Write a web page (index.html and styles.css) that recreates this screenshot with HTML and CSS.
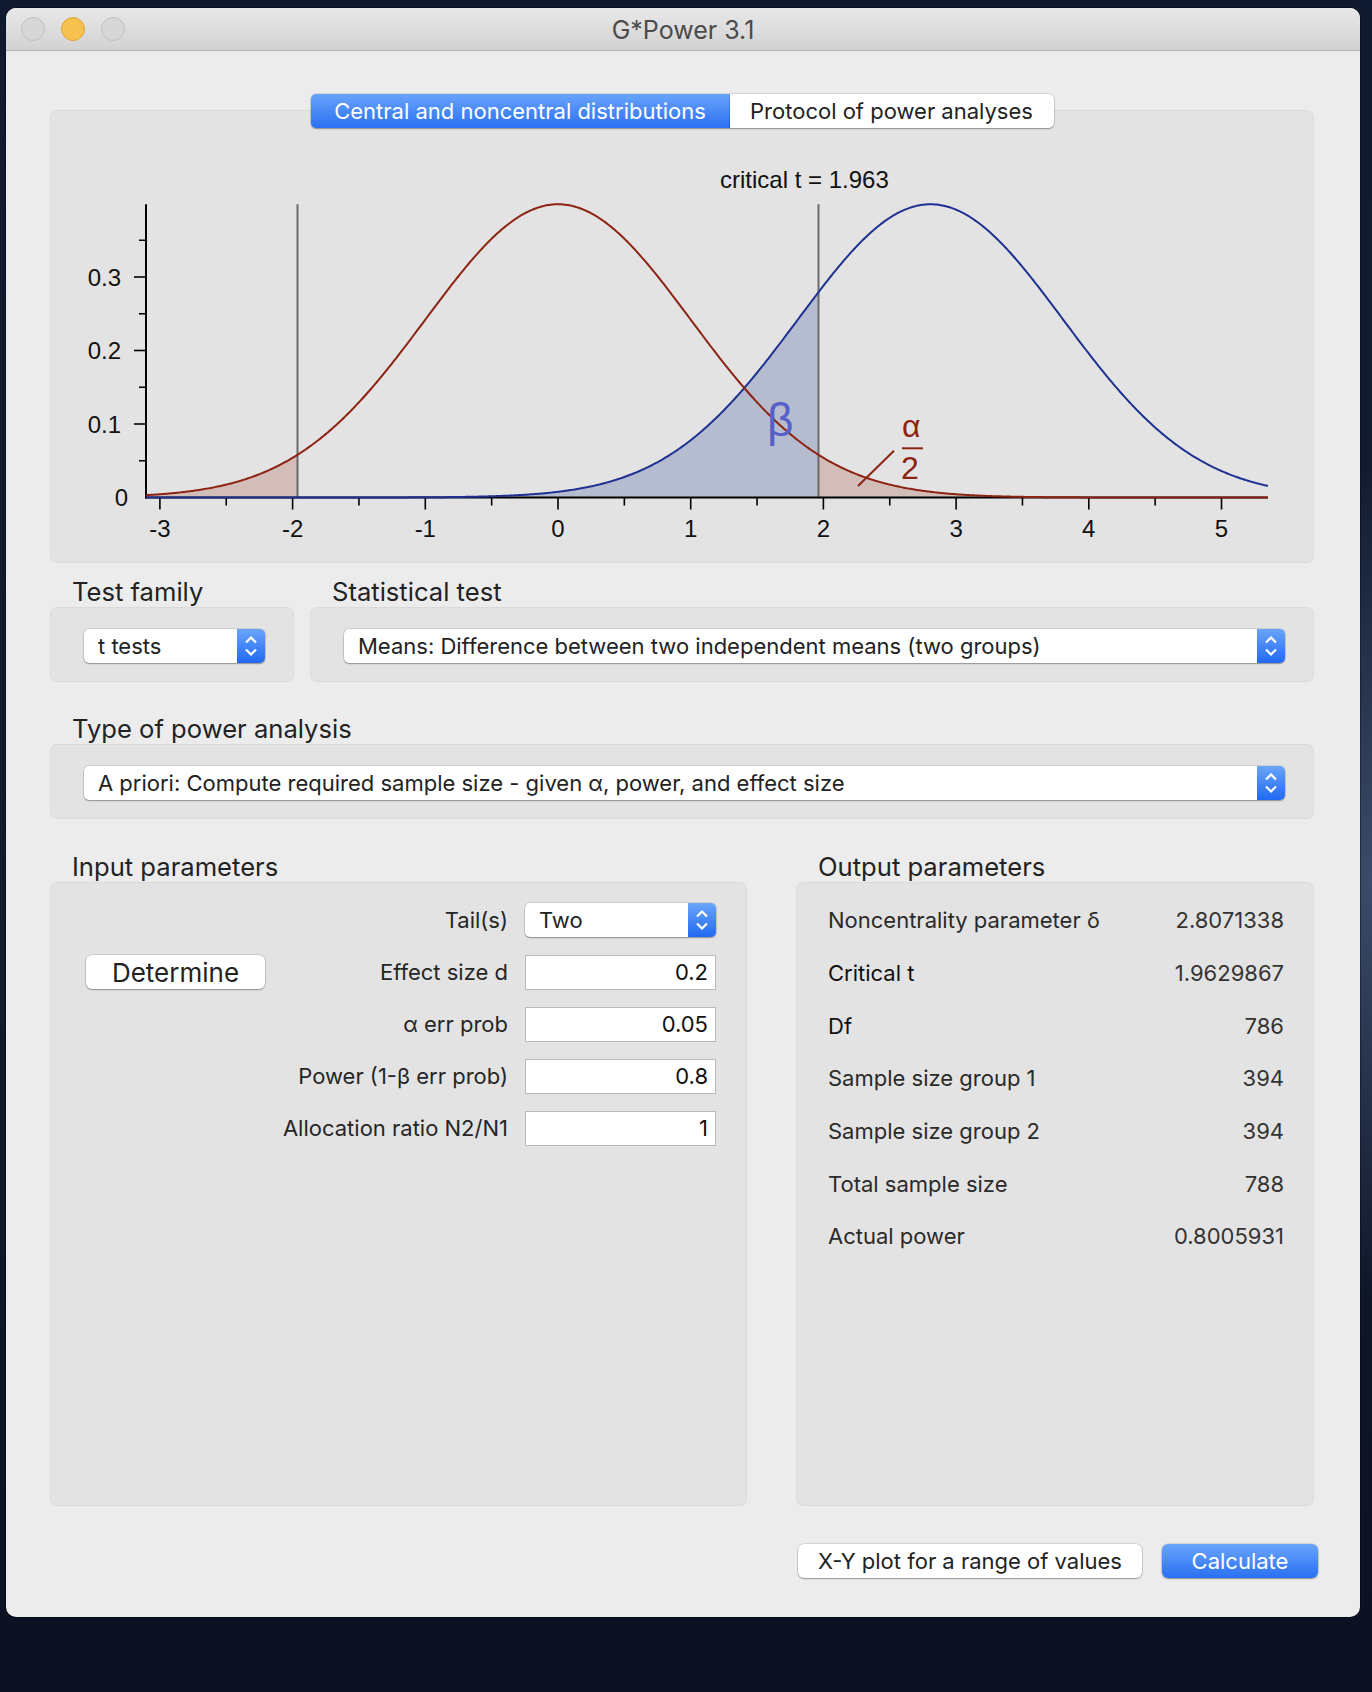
FILE: index.html
```html
<!DOCTYPE html>
<html lang="en">
<head>
  <meta charset="UTF-8">
  <title>G*Power 3.1</title>
  <link rel="stylesheet" href="styles.css">
</head>
<body>

<div class="window">
  <div class="titlebar">
    <div class="lights">
      <span class="light"></span>
      <span class="light light-min"></span>
      <span class="light"></span>
    </div>
    <div class="title">G*Power 3.1</div>
    <div></div>
  </div>

  <div class="content">
    <div class="plot-section">
      <div class="tabs">
        <div class="tab tab-active">Central and noncentral distributions</div>
        <div class="tab tab-protocol">Protocol of power analyses</div>
      </div>
      <div class="panel plot-panel">
        <svg id="plot" width="1262" height="451"></svg>
      </div>
    </div>

    <div class="row">
      <div class="group group-family">
        <div class="group-label">Test family</div>
        <div class="panel box">
          <div class="popup">
            <span class="popup-text">t tests</span>
            <span class="stepper"><svg width="28" height="34"><path d="M9 13.5 L14 8.5 L19 13.5 M9 20.5 L14 25.5 L19 20.5"/></svg></span>
          </div>
        </div>
      </div>
      <div class="group group-test">
        <div class="group-label">Statistical test</div>
        <div class="panel box">
          <div class="popup">
            <span class="popup-text">Means: Difference between two independent means (two groups)</span>
            <span class="stepper"><svg width="28" height="34"><path d="M9 13.5 L14 8.5 L19 13.5 M9 20.5 L14 25.5 L19 20.5"/></svg></span>
          </div>
        </div>
      </div>
    </div>

    <div class="group group-type">
      <div class="group-label">Type of power analysis</div>
      <div class="panel box">
        <div class="popup">
          <span class="popup-text">A priori: Compute required sample size - given α, power, and effect size</span>
          <span class="stepper"><svg width="28" height="34"><path d="M9 13.5 L14 8.5 L19 13.5 M9 20.5 L14 25.5 L19 20.5"/></svg></span>
        </div>
      </div>
    </div>

    <div class="row params">
      <div class="group group-input">
        <div class="group-label">Input parameters</div>
        <div class="panel params-box inputs">
          <div class="param-row">
            <span class="param-label">Tail(s)</span>
            <div class="popup popup-tails">
              <span class="popup-text">Two</span>
              <span class="stepper"><svg width="28" height="34"><path d="M9 13.5 L14 8.5 L19 13.5 M9 20.5 L14 25.5 L19 20.5"/></svg></span>
            </div>
          </div>
          <div class="param-row">
            <button class="btn btn-determine">Determine</button>
            <span class="param-label">Effect size d</span>
            <div class="field">0.2</div>
          </div>
          <div class="param-row">
            <span class="param-label">α err prob</span>
            <div class="field">0.05</div>
          </div>
          <div class="param-row">
            <span class="param-label">Power (1-β err prob)</span>
            <div class="field">0.8</div>
          </div>
          <div class="param-row">
            <span class="param-label">Allocation ratio N2/N1</span>
            <div class="field">1</div>
          </div>
        </div>
      </div>
      <div class="group group-output">
        <div class="group-label">Output parameters</div>
        <div class="panel params-box outputs">
          <div class="out-row"><span>Noncentrality parameter δ</span><span class="out-value">2.8071338</span></div>
          <div class="out-row out-dark"><span>Critical t</span><span class="out-value">1.9629867</span></div>
          <div class="out-row out-dark"><span>Df</span><span class="out-value">786</span></div>
          <div class="out-row"><span>Sample size group 1</span><span class="out-value">394</span></div>
          <div class="out-row"><span>Sample size group 2</span><span class="out-value">394</span></div>
          <div class="out-row"><span>Total sample size</span><span class="out-value">788</span></div>
          <div class="out-row"><span>Actual power</span><span class="out-value">0.8005931</span></div>
        </div>
      </div>
    </div>

    <div class="actions">
      <button class="btn btn-xy">X-Y plot for a range of values</button>
      <button class="btn btn-calc">Calculate</button>
    </div>
  </div>
</div>

<script>
  // central t (df = 786) and noncentral t (delta = 2.807) drawn as normal densities
  const NS = "http://www.w3.org/2000/svg";
  const plot = document.getElementById("plot");

  const T_MIN = -3.105, T_MAX = 5.35;
  const T_CRIT = 1.963, DELTA = 2.807;

  const X = t => 507 + 132.7 * t;
  const Y = p => 386.5 - 735 * p;

  function dens(t, mu) {
    const z = t - mu;
    return Math.exp(-z * z / 2) / Math.sqrt(2 * Math.PI);
  }

  function points(mu, a, b) {
    const pts = [];
    for (let t = a; t < b; t += 0.01) {
      pts.push(X(t).toFixed(2) + "," + Y(dens(t, mu)).toFixed(2));
    }
    pts.push(X(b).toFixed(2) + "," + Y(dens(b, mu)).toFixed(2));
    return pts;
  }

  function curve(mu, a, b) {
    return "M" + points(mu, a, b).join(" L");
  }

  function area(mu, a, b) {
    return "M" + X(a) + "," + Y(0) + " L" + points(mu, a, b).join(" L") + " L" + X(b) + "," + Y(0) + " Z";
  }

  function add(tag, attrs, text) {
    const el = document.createElementNS(NS, tag);
    for (const k in attrs) el.setAttribute(k, attrs[k]);
    if (text !== undefined) el.textContent = text;
    plot.appendChild(el);
    return el;
  }

  // shaded areas
  add("path", { d: area(0, T_MIN, -T_CRIT), class: "fill-alpha" });
  add("path", { d: area(DELTA, T_MIN, T_CRIT), class: "fill-beta" });
  add("path", { d: area(0, T_CRIT, T_MAX), class: "fill-alpha" });

  // critical t lines
  [-T_CRIT, T_CRIT].forEach(t => {
    add("line", { x1: X(t), y1: 93.3, x2: X(t), y2: Y(0), class: "crit" });
  });

  // axes
  add("line", { x1: 95, y1: 93.3, x2: 95, y2: Y(0) + 1, class: "axis" });
  add("line", { x1: 94, y1: Y(0), x2: X(T_MAX), y2: Y(0), class: "axis" });

  for (let i = 1; i <= 7; i++) {
    const p = i * 0.05;
    const major = i % 2 === 0;
    add("line", { x1: 95 - (major ? 12 : 7), y1: Y(p), x2: 95, y2: Y(p), class: "tick" });
  }
  for (let i = -6; i <= 10; i++) {
    const major = i % 2 === 0;
    const t = i / 2;
    add("line", { x1: X(t), y1: Y(0), x2: X(t), y2: Y(0) + (major ? 12 : 8), class: "tick" });
  }

  ["0.1", "0.2", "0.3"].forEach(v => {
    add("text", { x: 70, y: Y(+v) + 8.5, class: "axis-label", "text-anchor": "end" }, v);
  });
  add("text", { x: 77, y: Y(0) + 8.5, class: "axis-label", "text-anchor": "end" }, "0");
  for (let t = -3; t <= 5; t++) {
    add("text", { x: X(t), y: 426, class: "axis-label", "text-anchor": "middle" }, String(t));
  }

  // density curves
  add("path", { d: curve(DELTA, T_MIN, T_MAX), class: "curve-h1" });
  add("path", { d: curve(0, T_MIN, T_MAX), class: "curve-h0" });

  // annotations
  add("text", { x: 669, y: 77, class: "axis-label" }, "critical t = 1.963");
  add("text", { x: 716, y: 325, class: "label-beta" }, "β");
  add("line", { x1: 807, y1: 375, x2: 843, y2: 339.7, class: "alpha-stroke" });
  add("text", { x: 851, y: 326, class: "label-alpha" }, "α");
  add("line", { x1: 851, y1: 337.3, x2: 872, y2: 337.3, class: "alpha-stroke" });
  add("text", { x: 850, y: 368, class: "label-alpha" }, "2");
</script>

</body>
</html>
```

FILE: styles.css
```css
body {
  margin: 0;
  background: radial-gradient(ellipse 140px 420px at 100% 52%, #3b4b69, rgba(27, 38, 60, 0) 100%),
              linear-gradient(#0f1a30, #121b30 50%, #0b1122);
  font-family: Inter, "Noto Sans", sans-serif;
  color: #262626;
  width: 1372px;
  height: 1692px;
  overflow: hidden;
}
.window {
  width: 1354px;
  height: 1609px;
  margin: 8px 0 0 6px;
  background-color: #ececec;
  border-radius: 10px;
  overflow: hidden;
  box-shadow: 0 0 0 1px rgba(0,0,0,0.35);
}
.titlebar {
  height: 42px;
  display: grid;
  grid-template-columns: 1fr auto 1fr;
  align-items: center;
  background: linear-gradient(#e9e8e9, #d3d2d3);
  border-bottom: 1px solid #b4b4b4;
}
.lights {
  display: flex;
  gap: 16px;
  padding-left: 15px;
}
.light {
  width: 22px;
  height: 22px;
  border-radius: 50%;
  background-color: #d8d7d8;
  border: 1px solid #bebebe;
}
.light-min {
  background-color: #f6c14f;
  border-color: #dca43c;
}
.title {
  font-size: 25px;
  color: #4b4b4b;
  padding-top: 2px;
}

.content {
  padding: 43px 46px 0 44px;
}
.panel {
  background-color: #e3e3e3;
  border: 1px solid #dadada;
  border-radius: 7px;
  box-sizing: border-box;
}

/* distribution plot */
.tabs {
  display: flex;
  justify-content: center;
  margin-bottom: -18px;
  position: relative;
  z-index: 1;
}
.tab {
  height: 34px;
  line-height: 34px;
  font-size: 22px;
  text-align: center;
  white-space: nowrap;
  background-color: white;
  color: #222;
  box-shadow: 0 0 0 0.5px rgba(0,0,0,0.18), 0 1px 1.5px rgba(0,0,0,0.3);
  border-radius: 0 5px 5px 0;
}
.tab-active {
  width: 419px;
  background: linear-gradient(#69a4fa, #2a70f3);
  color: white;
  border-radius: 5px 0 0 5px;
}
.tab-protocol {
  width: 324px;
}
.plot-panel {
  height: 453px;
}
#plot {
  display: block;
  overflow: visible;
}
.fill-alpha {
  fill: #d3bdb9;
}
.fill-beta {
  fill: #b6bccf;
}
.crit {
  stroke: #6a6a6a;
  stroke-width: 2;
}
.axis {
  stroke: #000;
  stroke-width: 2;
}
.tick {
  stroke: #000;
  stroke-width: 1.6;
}
.axis-label {
  font-family: "Liberation Sans", Arial, sans-serif;
  font-size: 24px;
  fill: #111;
}
.curve-h0, .curve-h1 {
  fill: none;
  stroke-width: 2;
}
.curve-h0 {
  stroke: #8c2313;
}
.curve-h1 {
  stroke: #1e3192;
}
.label-beta {
  font-family: "Liberation Sans", Arial, sans-serif;
  font-size: 46px;
  fill: #5660c8;
}
.label-alpha {
  font-family: "Liberation Sans", Arial, sans-serif;
  font-size: 32px;
  fill: #8c2313;
}
.alpha-stroke {
  stroke: #8c2313;
  stroke-width: 2;
}

/* selection groups */
.row {
  display: flex;
  gap: 16px;
}
.group-label {
  height: 30px;
  line-height: 30px;
  margin-top: 14px;
  padding-left: 22px;
  font-size: 25.6px;
  color: #222;
}
.group-family {
  width: 244px;
}
.group-test {
  flex: 1;
}
.group-type .group-label {
  margin-top: 32px;
}
.box {
  height: 75px;
  display: flex;
  align-items: center;
  padding: 2px 28px 0 33px;
}
.popup {
  flex: 1;
  height: 34px;
  display: flex;
  background-color: white;
  border-radius: 5px;
  box-shadow: 0 0 0 0.5px rgba(0,0,0,0.18), 0 1px 1.5px rgba(0,0,0,0.3);
  font-size: 22px;
}
.popup-text {
  flex: 1;
  line-height: 34px;
  padding-left: 14px;
  white-space: nowrap;
  color: #222;
}
.stepper {
  width: 28px;
  background: linear-gradient(#6aa5fa, #2169f2);
  border-radius: 0 5px 5px 0;
}
.stepper svg {
  display: block;
}
.stepper path {
  fill: none;
  stroke: white;
  stroke-width: 2.2;
}

/* parameters */
.params {
  gap: 49px;
}
.params .group-label {
  margin-top: 33px;
}
.group-input {
  width: 697px;
}
.group-output {
  flex: 1;
}
.params-box {
  height: 624px;
}
.inputs {
  padding: 11px 30px 0 35px;
}
.param-row {
  height: 52px;
  display: flex;
  align-items: center;
  justify-content: flex-end;
  gap: 17px;
  font-size: 22px;
}
.param-label {
  color: #262626;
}
.popup-tails {
  flex: none;
  width: 191px;
}
.field {
  width: 191px;
  height: 35px;
  line-height: 33px;
  box-sizing: border-box;
  background-color: white;
  border: 1px solid #b9b9b9;
  text-align: right;
  padding-right: 7px;
  color: #111;
}
.outputs {
  padding: 11px 29px 0 31px;
}
.out-row {
  height: 52.7px;
  display: flex;
  align-items: center;
  justify-content: space-between;
  font-size: 22px;
  color: #2a2a2a;
}
.out-dark {
  color: #111;
}
.out-value {
  color: #333;
}

/* buttons */
.btn {
  font-family: Inter, "Noto Sans", sans-serif;
  height: 34px;
  border: none;
  border-radius: 6px;
  background-color: white;
  color: #222;
  box-shadow: 0 0 0 0.5px rgba(0,0,0,0.2), 0 1px 1.5px rgba(0,0,0,0.3);
  padding: 0;
}
.btn-determine {
  width: 179px;
  font-size: 26px;
  margin-right: auto;
}
.actions {
  display: flex;
  justify-content: flex-end;
  gap: 20px;
  margin: 38px -4px 0 0;
}
.btn-xy {
  width: 344px;
  font-size: 22px;
}
.btn-calc {
  width: 156px;
  font-size: 22px;
  color: white;
  background: linear-gradient(#6aa5fa, #2a70f3);
}
```
